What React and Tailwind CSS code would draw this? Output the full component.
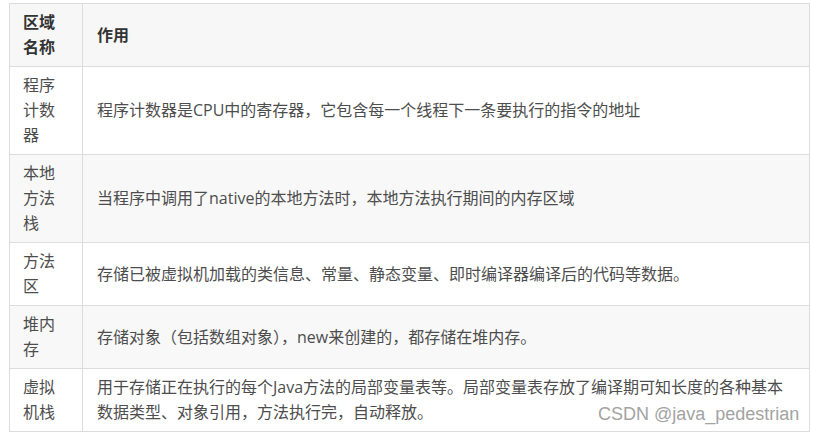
import React from "react";

const rows = [
  { name: "程序计数器", desc: "程序计数器是CPU中的寄存器，它包含每一个线程下一条要执行的指令的地址" },
  { name: "本地方法栈", desc: "当程序中调用了native的本地方法时，本地方法执行期间的内存区域" },
  { name: "方法区", desc: "存储已被虚拟机加载的类信息、常量、静态变量、即时编译器编译后的代码等数据。" },
  { name: "堆内存", desc: "存储对象（包括数组对象），new来创建的，都存储在堆内存。" },
  {
    name: "虚拟机栈",
    desc: "用于存储正在执行的每个Java方法的局部变量表等。局部变量表存放了编译期可知长度的各种基本数据类型、对象引用，方法执行完，自动释放。",
  },
];

export default function App() {
  return (
    <div
      className="relative w-[813px] h-[437px] bg-white overflow-hidden pt-[3px] pl-[9px]"
      style={{ fontFamily: '"Open Sans", "Noto Sans CJK SC", sans-serif' }}
    >
      {/* TABLE */}
      <div className="grid grid-cols-[73px_727px] w-[801px] border-l border-t border-[#dcdcdc] text-[16px] leading-[25px] text-[#4d4d4d]">
        {/* HEADER */}
        <div className="bg-[#f7f7f7] border-r border-b border-[#dcdcdc] py-[6px] pl-[13px] pr-[13px] font-bold text-[#333]">
          区域名称
        </div>
        <div className="bg-[#f7f7f7] border-r border-b border-[#dcdcdc] py-[6px] pl-[14px] pr-[14px] flex items-center font-bold text-[#333]">
          作用
        </div>

        {rows.map((row, i) => (
          <React.Fragment key={row.name}>
            <div
              className={`border-r border-b border-[#dcdcdc] py-[6px] pl-[13px] pr-[13px] ${
                i % 2 === 1 ? "bg-[#f8f8f8]" : "bg-white"
              }`}
            >
              {row.name}
            </div>
            <div
              className={`border-r border-b border-[#dcdcdc] py-[6px] pl-[14px] pr-[14px] flex items-center ${
                i % 2 === 1 ? "bg-[#f8f8f8]" : "bg-white"
              }`}
            >
              {row.desc}
            </div>
          </React.Fragment>
        ))}
      </div>

      {/* WATERMARK */}
      <div
        className="absolute left-[598px] top-[402px] text-[18px] leading-[24px] text-[#a3a3a3] whitespace-nowrap"
        style={{ fontFamily: '"Liberation Sans", Arial, sans-serif' }}
      >
        CSDN @java_pedestrian
      </div>
    </div>
  );
}
